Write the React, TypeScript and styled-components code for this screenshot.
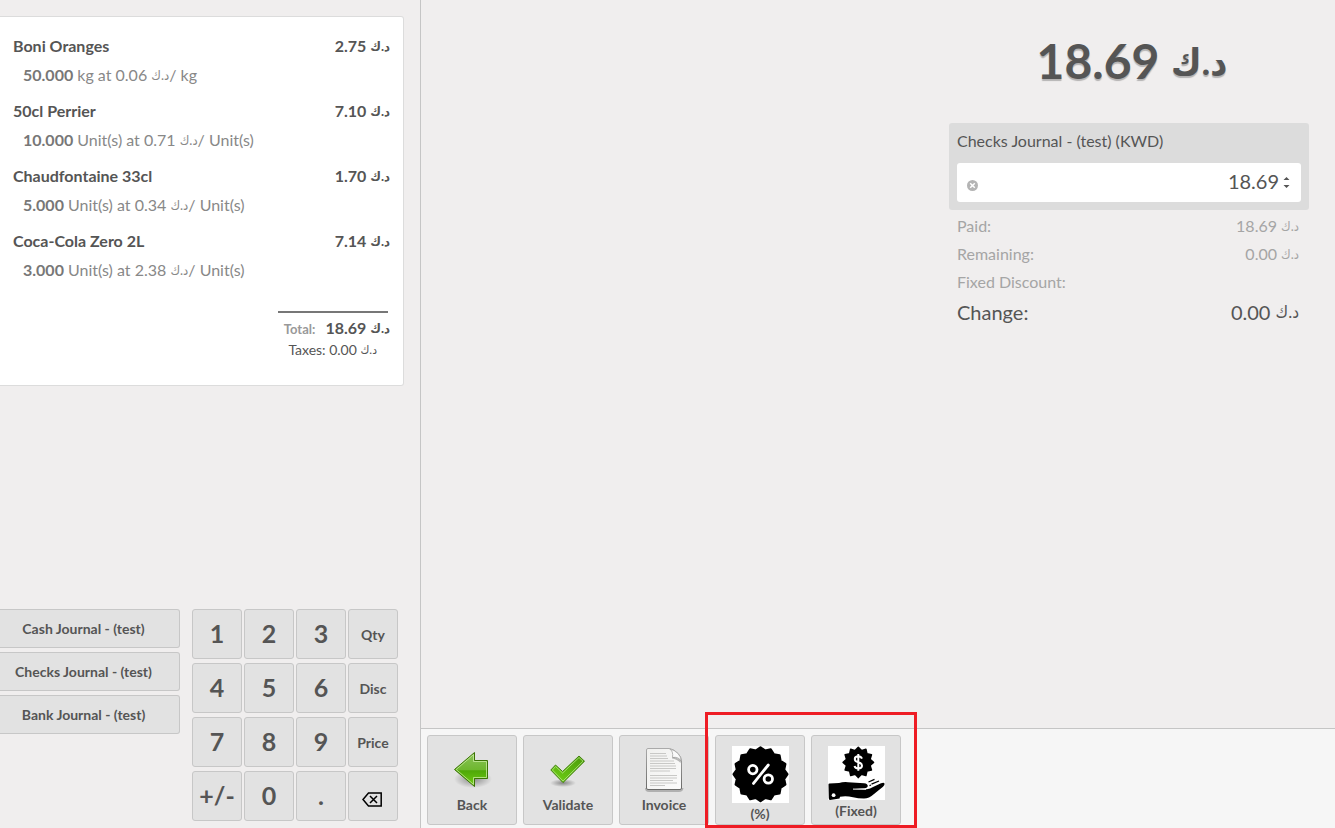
import React from 'react';
import styled, { createGlobalStyle } from 'styled-components';

const Global = createGlobalStyle`
  * { box-sizing: border-box; }
  html, body, #root { height: 100%; }
  body {
    margin: 0;
    background: #f0eeee;
    color: #555;
    font-family: Lato, "DejaVu Sans", sans-serif;
    font-size: 16px;
  }
  button, input { font-family: inherit; color: inherit; }
`;

const Page = styled.div`
  display: flex;
  height: 100%;
`;

const LeftPane = styled.aside`
  flex: 0 0 421px;
  display: flex;
  flex-direction: column;
  justify-content: space-between;
  padding: 16px 16px 7px 0;
  border-right: 1px solid #c5c5c5;
`;

const Receipt = styled.section`
  background: #fff;
  border: 1px solid #dcdcdc;
  border-left: 0;
  border-radius: 0 3px 3px 0;
  padding: 12px 13px 25px;
`;

const Lines = styled.ul`
  list-style: none;
  margin: 0 0 22px;
  padding: 0;
`;

const Line = styled.li`
  padding: 5px 0;
`;

const LineHead = styled.div`
  display: flex;
  justify-content: space-between;
  font-weight: 700;
  line-height: 24px;
`;

const LineInfo = styled.div`
  padding: 3px 0 0 10px;
  line-height: 28px;
  color: #888;
  & b { color: #777; }
`;

const Currency = styled.bdi<{ $size: number; $raise: number }>`
  font-family: Lato, "DejaVu Sans Condensed", "DejaVu Sans", sans-serif;
  font-size: ${(p) => p.$size}px;
  line-height: 0;
  vertical-align: ${(p) => p.$raise}px;
`;

const Totals = styled.div`
  width: 110px;
  margin: 0 2px 0 auto;
  border-top: 2px solid #777;
  padding-top: 4px;
  white-space: nowrap;
`;

const TotalRow = styled.div`
  display: flex;
  justify-content: flex-end;
  align-items: baseline;
  gap: 10px;
  margin-right: -2px;
  font-weight: 700;
  line-height: 22px;
`;

const TotalLabel = styled.span`
  font-size: 13px;
  color: #999;
`;

const Taxes = styled.div`
  padding-right: 11px;
  text-align: right;
  font-size: 14px;
  line-height: 20px;
`;

const Controls = styled.div`
  display: flex;
  gap: 12px;
`;

const Journals = styled.div`
  flex: 0 0 180px;
  display: flex;
  flex-direction: column;
  gap: 4px;
`;

const Key = styled.button`
  border: 1px solid #c7c7c7;
  border-radius: 3px;
  background: #e2e2e2;
  font-weight: 700;
  padding: 0;
`;

const JournalButton = styled(Key)`
  height: 39px;
  border-left: 0;
  border-radius: 0 3px 3px 0;
  font-size: 14px;
  padding-right: 12px;
`;

const Pad = styled.div`
  display: grid;
  grid-template-columns: repeat(4, 50px);
  grid-auto-rows: 50px;
  gap: 4px 2px;
`;

const PadKey = styled(Key)<{ $mode?: boolean }>`
  display: flex;
  align-items: center;
  justify-content: center;
  font-size: ${(p) => (p.$mode ? 14 : 25)}px;
  padding-bottom: ${(p) => (p.$mode ? 0 : 2)}px;
`;

const EraseKey = styled(Key)`
  display: flex;
  align-items: center;
  justify-content: center;
  padding: 6px 2px 0 0;
`;

const RightPane = styled.main`
  flex: 1;
  display: flex;
  flex-direction: column;
  justify-content: space-between;
`;

const Payment = styled.section`
  width: 360px;
  margin: 0 26px 0 auto;
`;

const Amount = styled.h1`
  margin: 0;
  padding: 31px 0 32px 6px;
  font-size: 48px;
  line-height: 60px;
  text-align: center;
  text-shadow: 0 2px 1px rgba(0, 0, 0, 0.25);
`;

const PayLine = styled.div`
  background: #dcdcdc;
  border-radius: 3px;
  padding: 8px;
`;

const PayLabel = styled.label`
  display: block;
  line-height: 20px;
  margin-bottom: 12px;
`;

const PayField = styled.div`
  display: flex;
  align-items: center;
  height: 39px;
  padding: 0 10px;
  background: #fff;
  border-radius: 3px;
`;

const RemoveButton = styled.button`
  display: flex;
  border: 0;
  padding: 6px 0 0;
  background: none;
`;

const PayInput = styled.input`
  flex: 1;
  min-width: 0;
  border: 0;
  outline: 0;
  padding: 0 0 3px;
  margin-right: 4px;
  background: none;
  text-align: right;
  font-size: 20px;
`;

const Summary = styled.dl`
  margin: 0;
  padding: 2px 10px 0 8px;
`;

const SummaryRow = styled.div<{ $strong?: boolean }>`
  display: flex;
  justify-content: space-between;
  line-height: ${(p) => (p.$strong ? 32 : 28)}px;
  font-size: ${(p) => (p.$strong ? 20 : 16)}px;
  color: ${(p) => (p.$strong ? '#555' : '#a5a5a5')};
  & dd { margin: 0; }
`;

const ActionBar = styled.footer`
  display: flex;
  gap: 6px;
  height: 100px;
  padding: 6px;
  border-top: 1px solid #c5c5c5;
  background: #f6f6f6;
`;

const Action = styled(Key)`
  width: 90px;
  height: 90px;
  display: flex;
  flex-direction: column;
  align-items: center;
  font-size: 14px;
  line-height: 22px;
  padding-top: 10px;
  & svg { flex: none; }
`;

const Discounts = styled.div`
  position: relative;
  display: flex;
  gap: 6px;
  height: 90px;
`;

const Frame = styled.div`
  position: absolute;
  inset: -23px -16px -3px -10px;
  border: 3px solid #ee1c24;
  pointer-events: none;
`;

/* Outline of a seal with pointed teeth around a centre. */
const seal = (cx: number, cy: number, outer: number, inner: number, teeth: number) =>
  Array.from({ length: teeth * 2 }, (_, i) => {
    const r = i % 2 ? inner : outer;
    const a = (Math.PI * i) / teeth;
    return `${(cx + r * Math.sin(a)).toFixed(2)},${(cy - r * Math.cos(a)).toFixed(2)}`;
  }).join(' ');

const BackIcon = () => (
  <svg width="48" height="48" viewBox="0 0 48 48" aria-hidden="true">
    <defs>
      <linearGradient id="back-fill" x1="0" y1="0" x2="0" y2="1">
        <stop offset="0" stopColor="#8cc25c" />
        <stop offset="0.5" stopColor="#6fb82f" />
        <stop offset="0.54" stopColor="#4fa808" />
        <stop offset="1" stopColor="#72cf14" />
      </linearGradient>
      <radialGradient id="back-shade">
        <stop offset="0" stopColor="#000" stopOpacity="0.4" />
        <stop offset="1" stopColor="#000" stopOpacity="0" />
      </radialGradient>
    </defs>
    <ellipse cx="25" cy="33" rx="19" ry="9" fill="url(#back-shade)" />
    <path d="M6.5 23.5 26.5 6.5V14.5H39.5V32.5H26.5V40.5Z" fill="url(#back-fill)" stroke="#3a7304" strokeLinejoin="round" />
    <path d="M8.2 23.5 25.5 8.6V15.5H38.5V31.5H25.5V38.4Z" fill="none" stroke="#c5ec9c" strokeOpacity="0.8" />
  </svg>
);

const ValidateIcon = () => (
  <svg width="48" height="48" viewBox="0 0 48 48" aria-hidden="true">
    <defs>
      <linearGradient id="tick-fill" x1="1" y1="0" x2="0.3" y2="1">
        <stop offset="0" stopColor="#4a9a0a" />
        <stop offset="1" stopColor="#6ccb14" />
      </linearGradient>
      <radialGradient id="tick-shade">
        <stop offset="0" stopColor="#000" stopOpacity="0.4" />
        <stop offset="1" stopColor="#000" stopOpacity="0" />
      </radialGradient>
    </defs>
    <ellipse cx="19" cy="37" rx="13" ry="4" fill="url(#tick-shade)" />
    <path d="M6.8 24 11.5 19 18.6 25.5 35 10 40.5 15.2 19 36.6Z" fill="url(#tick-fill)" stroke="#43820f" strokeLinejoin="round" />
    <path d="M8.4 24 11.6 20.5 18.6 27 35 11.5 39 15.2 19 35Z" fill="none" stroke="#b7ea85" strokeOpacity="0.8" />
  </svg>
);

const textLines: [number, number][] = [
  [7.5, 26], [10, 27], [12.5, 28], [15, 34], [17.5, 35], [20, 36], [22.5, 36], [25, 30],
  [29.5, 37], [32, 37], [34.5, 33], [37, 37], [39.5, 25],
];

const InvoiceIcon = () => (
  <svg width="48" height="48" viewBox="0 0 48 48" aria-hidden="true">
    <defs>
      <linearGradient id="page-fill" x1="0" y1="0" x2="1" y2="1">
        <stop offset="0" stopColor="#f0f0ee" />
        <stop offset="1" stopColor="#fbfbfb" />
      </linearGradient>
      <linearGradient id="page-edge" x1="0" y1="0" x2="0" y2="1">
        <stop offset="0" stopColor="#aaa" />
        <stop offset="1" stopColor="#6a6a68" />
      </linearGradient>
    </defs>
    <path d="M5 42Q5 46 9 46H39Q43 46 43.5 42Z" fill="#000" fillOpacity="0.22" />
    <path d="M8 2.5H29.5Q34 3 38 7.5 41.5 11 41.5 15V42Q41.5 43.5 40 43.5H8Q6.5 43.5 6.5 42V4Q6.5 2.5 8 2.5Z" fill="url(#page-fill)" stroke="url(#page-edge)" />
    {textLines.map(([y, end]) => (
      <path key={y} d={`M10 ${y}H${end}`} stroke="#c8c8c6" />
    ))}
    <path d="M29.5 2.8Q33.5 5 32.5 11.5 38.5 10.5 41.3 15 40.5 6 29.5 2.8Z" fill="#fafafa" stroke="#a6a6a4" strokeWidth="0.8" />
    <path d="M32.5 11.5Q38 11 41 15L40.5 17Q37 13 32 12.5Z" fill="#000" fillOpacity="0.25" />
  </svg>
);

const PercentIcon = () => (
  <svg width="57" height="57" viewBox="0 0 57 57" aria-hidden="true">
    <rect width="57" height="57" fill="#fff" />
    <polygon points={seal(28.5, 28.3, 26.8, 24, 16)} stroke="#000" strokeWidth="2.4" strokeLinejoin="round" />
    <g fill="none" stroke="#fff" strokeWidth="2.8" strokeLinecap="round">
      <circle cx="20.8" cy="23.6" r="4.2" />
      <circle cx="36.3" cy="33" r="4.2" />
      <path d="M36.3 19 21.5 37.4" />
    </g>
  </svg>
);

const FixedIcon = () => (
  <svg width="57" height="54" viewBox="0 0 57 54" aria-hidden="true">
    <rect width="57" height="54" fill="#fff" />
    <polygon points={seal(30.3, 16.4, 15.2, 12.2, 12)} stroke="#000" strokeWidth="1.5" strokeLinejoin="round" />
    <path d="M34 12.6Q33 10.3 30.3 10.3 26.8 10.3 26.8 13 26.8 15.4 30.3 16.3 34 17.3 34 19.8 34 22.5 30.3 22.5 27.3 22.5 26.5 20M30.3 8V24.8" fill="none" stroke="#fff" strokeWidth="2" />
    <path d="M0.5 38.5Q0.5 37.5 1.5 37.5L11 37Q15 35.8 20 36.2L36 37.2Q40 37.6 39.8 40.3 39.5 42 37 42.2L27 42.8 39 43.2Q42 43 45 41L53 37.2Q56 36 56.5 37.5 57 39 55 40.8L46 48Q41 52.5 36 52.5 30 52.5 25 51.3 18 49.5 12 50.8L11.5 52.5 2 54Q0.8 54 0.8 52Z" />
    <path d="M25 43.1 38 43.3" stroke="#fff" strokeWidth="1" />
    <circle cx="5.6" cy="49.2" r="1.9" fill="#fff" />
    <path d="M40.5 36 46.5 33.4M43.5 38.2 51 35M41.5 39.6 43 39" stroke="#000" strokeWidth="1.3" />
  </svg>
);

const EraseIcon = () => (
  <svg width="20" height="15" viewBox="0 0 20 15" fill="none" stroke="#000" strokeWidth="1.5" aria-hidden="true">
    <path d="M6.5 1H19.2V14H6.5L1 7.5Z" />
    <path d="M8 4 15 11M15 4 8 11" />
  </svg>
);

const RemoveIcon = () => (
  <svg width="11" height="11" viewBox="0 0 11 11" aria-hidden="true">
    <circle cx="5.5" cy="5.5" r="5.5" fill="#b4b4b4" />
    <path d="M3.2 3.2 7.8 7.8M7.8 3.2 3.2 7.8" stroke="#fff" strokeWidth="1.5" />
  </svg>
);

const SpinnerIcon = () => (
  <svg width="8" height="14" viewBox="0 0 8 14" fill="#555" aria-hidden="true">
    <path d="M0.5 4 3.5 1 6.5 4ZM0.5 9H6.5L3.5 12Z" />
  </svg>
);

const lines = [
  { name: 'Boni Oranges', price: '2.75', qty: '50.000', unit: 'kg', each: '0.06' },
  { name: '50cl Perrier', price: '7.10', qty: '10.000', unit: 'Unit(s)', each: '0.71' },
  { name: 'Chaudfontaine 33cl', price: '1.70', qty: '5.000', unit: 'Unit(s)', each: '0.34' },
  { name: 'Coca-Cola Zero 2L', price: '7.14', qty: '3.000', unit: 'Unit(s)', each: '2.38' },
];

const journals = ['Cash Journal - (test)', 'Checks Journal - (test)', 'Bank Journal - (test)'];

const keys = ['1', '2', '3', 'Qty', '4', '5', '6', 'Disc', '7', '8', '9', 'Price', '+/-', '0', '.'];

const Dinar = ({ size = 13, raise = 1 }: { size?: number; raise?: number }) => (
  <Currency dir="rtl" $size={size} $raise={raise}>د.ك</Currency>
);

export default function App() {
  return (
    <Page>
      <Global />
      <LeftPane>
        <Receipt>
          <Lines>
            {lines.map((l) => (
              <Line key={l.name}>
                <LineHead>
                  <span>{l.name}</span>
                  <span>{l.price} <Dinar /></span>
                </LineHead>
                <LineInfo>
                  <b>{l.qty}</b> {l.unit} at {l.each} <Dinar />/ {l.unit}
                </LineInfo>
              </Line>
            ))}
          </Lines>
          <Totals>
            <TotalRow>
              <TotalLabel>Total:</TotalLabel>
              <span>18.69 <Dinar /></span>
            </TotalRow>
            <Taxes>Taxes: 0.00 <Dinar size={12} /></Taxes>
          </Totals>
        </Receipt>
        <Controls>
          <Journals>
            {journals.map((j) => <JournalButton key={j}>{j}</JournalButton>)}
          </Journals>
          <Pad>
            {keys.map((k, i) => <PadKey key={k} $mode={i % 4 === 3}>{k}</PadKey>)}
            <EraseKey aria-label="Backspace"><EraseIcon /></EraseKey>
          </Pad>
        </Controls>
      </LeftPane>
      <RightPane>
        <Payment>
          <Amount>18.69 <Dinar size={37} raise={4} /></Amount>
          <PayLine>
            <PayLabel htmlFor="amount">Checks Journal - (test) (KWD)</PayLabel>
            <PayField>
              <RemoveButton aria-label="Remove payment"><RemoveIcon /></RemoveButton>
              <PayInput id="amount" inputMode="decimal" defaultValue="18.69" />
              <SpinnerIcon />
            </PayField>
          </PayLine>
          <Summary>
            <SummaryRow><dt>Paid:</dt><dd>18.69 <Dinar /></dd></SummaryRow>
            <SummaryRow><dt>Remaining:</dt><dd>0.00 <Dinar /></dd></SummaryRow>
            <SummaryRow><dt>Fixed Discount:</dt><dd /></SummaryRow>
            <SummaryRow $strong><dt>Change:</dt><dd>0.00 <Dinar size={17} raise={2} /></dd></SummaryRow>
          </Summary>
        </Payment>
        <ActionBar>
          <Action><BackIcon />Back</Action>
          <Action><ValidateIcon />Validate</Action>
          <Action><InvoiceIcon />Invoice</Action>
          <Discounts>
            <Action><PercentIcon />(%)</Action>
            <Action><FixedIcon />(Fixed)</Action>
            <Frame />
          </Discounts>
        </ActionBar>
      </RightPane>
    </Page>
  );
}
